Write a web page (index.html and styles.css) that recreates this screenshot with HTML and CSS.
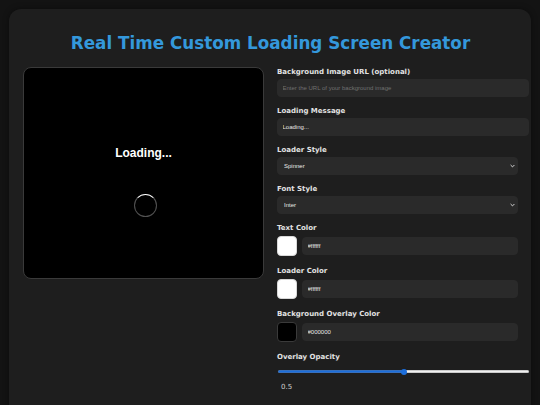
FILE: index.html
```html
<!DOCTYPE html>
<html lang="en">
<head>
<meta charset="utf-8">
<title>Real Time Custom Loading Screen Creator</title>
<link rel="stylesheet" href="styles.css">
</head>
<body>
<div class="container">
  <h1 class="title">Real Time Custom Loading Screen Creator</h1>
  <div class="layout">
    <div class="preview">
      <div class="preview-text">Loading...</div>
      <div class="spinner"></div>
    </div>
    <div class="form">
      <div class="field">
        <label class="label">Background Image URL (optional)</label>
        <input class="text-input" type="text" placeholder="Enter the URL of your background image">
      </div>
      <div class="field">
        <label class="label">Loading Message</label>
        <input class="text-input" type="text" value="Loading...">
      </div>
      <div class="field">
        <label class="label">Loader Style</label>
        <div class="select-wrap">
          <select class="select"><option>Spinner</option></select>
          <svg class="chevron" width="5" height="4" viewBox="0 0 5 4"><path d="M0.6 1 L2.5 2.9 L4.4 1" fill="none" stroke="#d8d8d8" stroke-width="1"/></svg>
        </div>
      </div>
      <div class="field">
        <label class="label">Font Style</label>
        <div class="select-wrap">
          <select class="select"><option>Inter</option></select>
          <svg class="chevron" width="5" height="4" viewBox="0 0 5 4"><path d="M0.6 1 L2.5 2.9 L4.4 1" fill="none" stroke="#d8d8d8" stroke-width="1"/></svg>
        </div>
      </div>
      <div class="field">
        <label class="label">Text Color</label>
        <div class="color-row">
          <span class="swatch swatch-white"></span>
          <input class="text-input color-text" type="text" value="#ffffff">
        </div>
      </div>
      <div class="field">
        <label class="label">Loader Color</label>
        <div class="color-row">
          <span class="swatch swatch-white"></span>
          <input class="text-input color-text" type="text" value="#ffffff">
        </div>
      </div>
      <div class="field">
        <label class="label">Background Overlay Color</label>
        <div class="color-row">
          <span class="swatch swatch-black"></span>
          <input class="text-input color-text" type="text" value="#000000">
        </div>
      </div>
      <div class="field">
        <label class="label">Overlay Opacity</label>
        <input class="range" type="range" min="0" max="1" step="0.1" value="0.5">
        <span class="range-value">0.5</span>
      </div>
    </div>
  </div>
</div>
</body>
</html>
```

FILE: styles.css
```css
html, body {
  margin: 0;
}
body {
  padding: 9px;
  background: #131313;
  font-family: "DejaVu Sans", sans-serif;
  color: #e0e0e0;
}
.container {
  background: #1e1e1e;
  border-radius: 12px;
  padding: 14px 13px 40px 14px;
  box-shadow: 0 0 6px rgba(0,0,0,0.4);
}
.title {
  font-size: 16.8px;
  font-weight: bold;
  color: #3498db;
  text-align: center;
  margin: 10.7px 0 14.6px;
  line-height: 18.6px;
}
.layout {
  display: grid;
  grid-template-columns: 1fr 1fr;
  column-gap: 13px;
  align-items: start;
}
.preview {
  box-sizing: border-box;
  height: 212px;
  background: #000;
  border: 1px solid #3a3a3a;
  border-radius: 8px;
  display: flex;
  flex-direction: column;
  align-items: center;
  justify-content: center;
  padding-top: 17px;
}
.preview-text {
  font-family: "Liberation Sans", Arial, sans-serif;
  font-weight: bold;
  font-size: 12px;
  line-height: 14px;
  color: #fff;
  margin-bottom: 34px;
}
.spinner {
  box-sizing: border-box;
  width: 23px;
  height: 23px;
  border-radius: 50%;
  border: 1.5px solid rgba(255,255,255,0.32);
  border-top-color: #fff;
  margin-left: 3px;
}
.form {
  display: flex;
  flex-direction: column;
}
.field {
  margin-bottom: 9px;
}
.label {
  display: block;
  font-size: 7px;
  font-weight: bold;
  line-height: 10px;
  color: #e2e2e2;
  margin-bottom: 2px;
}
.text-input {
  display: block;
  width: 100%;
  height: 16px;
  padding: 0 4.5px;
  margin: 0;
  border: 1px solid #2a2a2a;
  border-radius: 4px;
  background: #2a2a2a;
  color: #e8e8e8;
  font-family: "Liberation Sans", Arial, sans-serif;
  font-size: 6px;
  outline: none;
}
.text-input::placeholder {
  color: #707070;
}
.select-wrap {
  position: relative;
}
.select {
  display: block;
  box-sizing: border-box;
  width: 100%;
  height: 18px;
  margin: 0;
  padding: 0 6px;
  border: 1px solid #2a2a2a;
  border-radius: 4px;
  background: #2a2a2a;
  color: #e8e8e8;
  font-family: "Liberation Sans", Arial, sans-serif;
  font-size: 6px;
  -webkit-appearance: none;
  appearance: none;
  outline: none;
}
.chevron {
  position: absolute;
  right: 3px;
  top: 7px;
}
.color-row {
  display: flex;
  align-items: center;
  gap: 5px;
  height: 22px;
}
.swatch {
  box-sizing: border-box;
  width: 20px;
  height: 20px;
  border-radius: 4px;
  flex: none;
}
.swatch-white {
  background: #fff;
  border: 1px solid #d8d8d8;
}
.swatch-black {
  background: #000;
  border: 1px solid #3a3a3a;
}
.color-text {
  flex: 1;
  width: auto;
  min-width: 0;
  box-sizing: border-box;
  height: 18px;
}
.range {
  display: block;
  -webkit-appearance: none;
  appearance: none;
  width: calc(100% + 10px);
  height: 16px;
  margin: 0 0 2px 1px;
  padding: 0;
  background: transparent;
  outline: none;
}
.range::-webkit-slider-runnable-track {
  height: 3px;
  border-radius: 2px;
  background: linear-gradient(to right, #1c6edb 0 50%, #f0f0f0 50% 100%);
  box-shadow: inset 0 0 0 0.5px rgba(120,120,120,0.6);
}
.range::-webkit-slider-thumb {
  -webkit-appearance: none;
  appearance: none;
  width: 6px;
  height: 6px;
  border-radius: 50%;
  background: #1c6edb;
  margin-top: -1.5px;
  border: none;
}
.range-value {
  display: block;
  margin-left: 4px;
  font-size: 7px;
  line-height: 10px;
  color: #cfcfcf;
}
```
